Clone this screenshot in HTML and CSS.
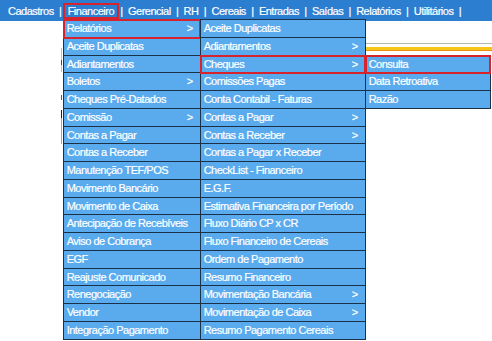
FILE: index.html
```html
<!DOCTYPE html>
<html lang="pt-BR">
<head>
<meta charset="utf-8">
<title>Financeiro</title>
<link rel="stylesheet" href="styles.css">
</head>
<body>
<nav class="topbar">
  <ul class="menu">
    <li class="top-item">Cadastros</li>
    <li class="sep">|</li>
    <li class="top-item active">Financeiro
      <ul class="drop col1">
        <li class="hl">Relatórios<span class="arrow">&gt;</span>
          <ul class="drop col2">
            <li>Aceite Duplicatas</li>
            <li>Adiantamentos<span class="arrow">&gt;</span></li>
            <li class="hl">Cheques<span class="arrow">&gt;</span>
              <ul class="drop col3">
                <li class="hl">Consulta</li>
                <li>Data Retroativa</li>
                <li>Razão</li>
              </ul>
            </li>
            <li>Comissões Pagas</li>
            <li>Conta Contabil - Faturas</li>
            <li>Contas a Pagar<span class="arrow">&gt;</span></li>
            <li>Contas a Receber<span class="arrow">&gt;</span></li>
            <li>Contas a Pagar x Receber</li>
            <li>CheckList - Financeiro</li>
            <li>E.G.F.</li>
            <li>Estimativa Financeira por Período</li>
            <li>Fluxo Diário CP x CR</li>
            <li>Fluxo Financeiro de Cereais</li>
            <li>Ordem de Pagamento</li>
            <li>Resumo Financeiro</li>
            <li>Movimentação Bancária<span class="arrow">&gt;</span></li>
            <li>Movimentação de Caixa<span class="arrow">&gt;</span></li>
            <li>Resumo Pagamento Cereais</li>
          </ul>
        </li>
        <li>Aceite Duplicatas</li>
        <li>Adiantamentos</li>
        <li>Boletos<span class="arrow">&gt;</span></li>
        <li>Cheques Pré-Datados</li>
        <li>Comissão<span class="arrow">&gt;</span></li>
        <li>Contas a Pagar</li>
        <li>Contas a Receber</li>
        <li>Manutenção TEF/POS</li>
        <li>Movimento Bancário</li>
        <li>Movimento de Caixa</li>
        <li>Antecipação de Recebíveis</li>
        <li>Aviso de Cobrança</li>
        <li>EGF</li>
        <li>Reajuste Comunicado</li>
        <li>Renegociação</li>
        <li>Vendor</li>
        <li>Integração Pagamento</li>
      </ul>
    </li>
    <li class="sep">|</li>
    <li class="top-item">Gerencial</li>
    <li class="sep">|</li>
    <li class="top-item">RH</li>
    <li class="sep">|</li>
    <li class="top-item">Cereais</li>
    <li class="sep">|</li>
    <li class="top-item">Entradas</li>
    <li class="sep">|</li>
    <li class="top-item">Saídas</li>
    <li class="sep">|</li>
    <li class="top-item">Relatórios</li>
    <li class="sep">|</li>
    <li class="top-item">Utilitários</li>
    <li class="sep">|</li>
  </ul>
</nav>
<main class="page">
  <div class="panel-head"></div>
  <div class="stripe"></div>
</main>
</body>
</html>
```

FILE: styles.css
```css
* { box-sizing: border-box; }
html, body { margin: 0; padding: 0; }
body {
  font-family: "Liberation Sans", Arial, sans-serif;
  font-size: 11px;
  letter-spacing: -0.5px;
  color: #ffffff;
  width: 492px;
  height: 341px;
  overflow: hidden;
  -webkit-text-stroke: 0.2px #ffffff;
  background-color: #ffffff;
  background-image: linear-gradient(to bottom,
      #f3c21c 0, #f3c21c 12px, #5a4a20 12px, #5a4a20 17px, #f3c21c 17px, #f3c21c 24px,
      #ffffff 24px, #ffffff 47px,
      #d8262a 47px, #d8262a 52px,
      #ffffff 52px, #ffffff 62px,
      #222222 62px, #222222 70px,
      #f19a1c 70px, #f19a1c 96px,
      #ffffff 96px);
  background-size: 1px 100px;
  background-position: 61px 48px;
  background-repeat: no-repeat;
}
ul { list-style: none; margin: 0; padding: 0; }

.topbar {
  height: 21px;
  background: #2c7ed1;
  padding-left: 4px;
  position: relative;
  z-index: 2;
}
.menu {
  display: flex;
  align-items: flex-start;
}
.top-item {
  margin-top: 3px;
  line-height: 16px;
  height: 16px;
  padding: 0 4px;
  position: relative;
  white-space: nowrap;
}
.top-item.active {
  padding: 0 5px;
  outline: 2px solid #d7232b;
  outline-offset: -2px;
}
.sep {
  margin-top: 3px;
  line-height: 16px;
  width: 5px;
  text-align: center;
}

.drop {
  position: absolute;
  background: #5aabee;
  border: 1px solid #1b3148;
  border-bottom: 0;
}
.drop li {
  position: relative;
  display: flex;
  align-items: center;
  height: 17.75px;
  line-height: 16.75px;
  padding: 0 7px 0 3px;
  border-bottom: 1px solid #1b3148;
  white-space: nowrap;
}
.drop li.hl {
  outline: 2px solid #d7232b;
  outline-offset: -1px;
  z-index: 3;
}
.arrow { margin-left: auto; }

.col1 { top: 100%; left: 0; width: 138px; }
.col2 { top: -1px; left: 100%; width: 166px; }
.col3 { top: -1px; left: 100%; width: 126px; }

.page {
  position: relative;
  z-index: 1;
  margin-left: 200px;
}
.panel-head {
  height: 23px;
  border-bottom: 1px solid #b4b4b4;
}
.stripe {
  margin-top: 3px;
  height: 4px;
  border-top: 3px solid #f6c619;
  border-bottom: 1px solid #ef8b12;
}
```
